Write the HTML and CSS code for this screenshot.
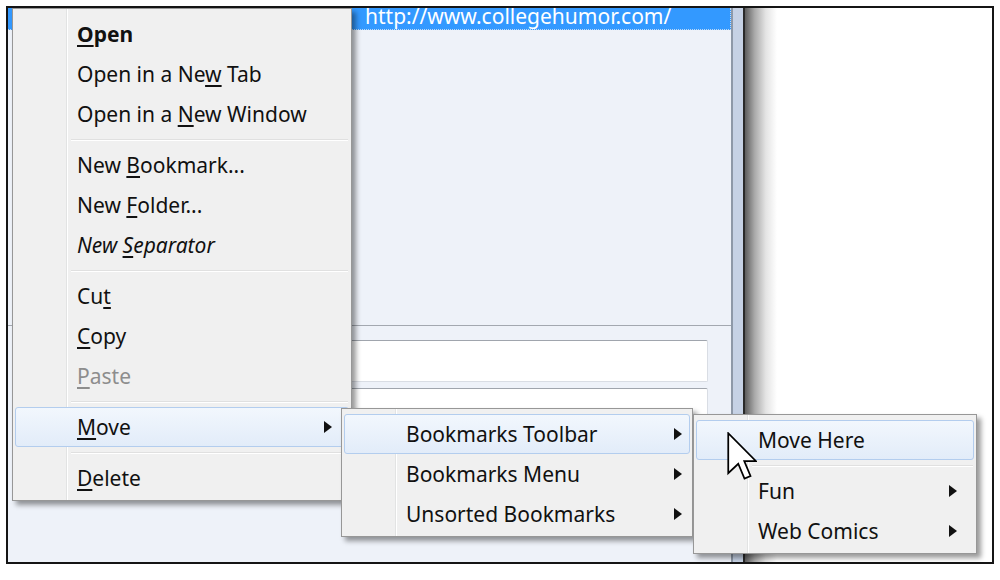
FILE: index.html
```html
<!DOCTYPE html>
<html>
<head>
<meta charset="utf-8">
<link rel="stylesheet" href="styles.css">
</head>
<body>
<div class="frame">
  <div class="panel">
    <div class="list">
      <div class="row-sel"><span>http://www.collegehumor.com/</span></div>
    </div>
    <div class="details">
      <div class="field"></div>
      <div class="field"></div>
    </div>
  </div>
  <div class="scroll"></div>
  <div class="shade"></div>
  <div class="blank"></div>
</div>

<div class="menu m1">
  <div class="item bold"><span class="label"><u>O</u>pen</span></div>
  <div class="item"><span class="label">Open in a Ne<u>w</u> Tab</span></div>
  <div class="item"><span class="label">Open in a <u>N</u>ew Window</span></div>
  <div class="sep"></div>
  <div class="item"><span class="label">New <u>B</u>ookmark...</span></div>
  <div class="item"><span class="label">New <u>F</u>older...</span></div>
  <div class="item ital"><span class="label">New <u>S</u>eparator</span></div>
  <div class="sep"></div>
  <div class="item"><span class="label">Cu<u>t</u></span></div>
  <div class="item"><span class="label"><u>C</u>opy</span></div>
  <div class="item dis"><span class="label"><u>P</u>aste</span></div>
  <div class="sep"></div>
  <div class="item hl"><span class="label"><u>M</u>ove</span><span class="arrow"></span></div>
  <div class="sep"></div>
  <div class="item"><span class="label"><u>D</u>elete</span></div>
</div>

<div class="menu m2">
  <div class="item hl"><span class="label">Bookmarks Toolbar</span><span class="arrow"></span></div>
  <div class="item"><span class="label">Bookmarks Menu</span><span class="arrow"></span></div>
  <div class="item"><span class="label">Unsorted Bookmarks</span><span class="arrow"></span></div>
</div>

<div class="menu m3">
  <div class="item hl"><span class="label">Move Here</span></div>
  <div class="sep"></div>
  <div class="item"><span class="label">Fun</span><span class="arrow"></span></div>
  <div class="item"><span class="label">Web Comics</span><span class="arrow"></span></div>
</div>

<svg class="cursor" viewBox="0 0 12 20" width="30" height="50">
  <path d="M0.5,0.5 L0.5,16.5 L4.5,12.7 L7,18.6 L9.4,17.6 L6.9,11.6 L11.5,11.6 Z" fill="#fff" stroke="#000" stroke-width="0.7" stroke-linejoin="miter"/>
</svg>
</body>
</html>
```

FILE: styles.css
```css
* { box-sizing: border-box; }

html, body {
  margin: 0;
  padding: 0;
}

body {
  width: 1000px;
  height: 580px;
  position: relative;
  overflow: hidden;
  background: #fff;
  font-family: "Noto Sans", "Open Sans", sans-serif;
  font-size: 21px;
  color: #111;
}

/* window frame */
.frame {
  margin: 6px 0 0 6px;
  width: 988px;
  height: 558px;
  border: 2px solid #151515;
  display: flex;
}

.panel {
  width: 723px;
  background: #eef2f9;
  display: flex;
  flex-direction: column;
}

.list {
  height: 317px;
}

.row-sel {
  height: 22px;
  background: #3399ff;
  color: #fff;
  padding-left: 357px;
  line-height: 17px;
  border-bottom: 1px dotted #bcd8f5;
  border-right: 1px dotted #bcd8f5;
  white-space: nowrap;
}

.details {
  flex: 1;
  border-top: 1px solid #a3a8b0;
  padding: 14px 23px 0 0;
  display: flex;
  flex-direction: column;
  align-items: flex-end;
  gap: 6px;
  overflow: hidden;
}

.field {
  flex: none;
  width: 420px;
  height: 42px;
  background: #fff;
  border: 1px solid #d9dde4;
  border-top-color: #a0a5ad;
  border-radius: 2px;
}

.scroll {
  width: 14px;
  background: #c6d2e5;
  border-left: 2px solid #8e99a8;
  border-right: 2px solid #2a2a2a;
}

.shade {
  width: 32px;
  background: linear-gradient(to right, #5e5e5e, #a9a9a9 30%, #e4e4e4 65%, #fff);
}

.blank {
  flex: 1;
  background: #fff;
}

/* menus */
.menu {
  position: absolute;
  background:
    linear-gradient(to right, transparent 53px, #e2e3e3 53px, #e2e3e3 54px, #fff 54px, #fff 55px, transparent 55px),
    #f0f0f0;
  border: 1px solid #979797;
  padding: 5px 2px 2px;
  box-shadow: 4px 4px 5px rgba(0, 0, 0, 0.4);
}

.m1 { left: 12px; top: 8px; width: 340px; }
.m2 { left: 341px; top: 408px; width: 352px; }
.m3 { left: 693px; top: 414px; width: 284px; }

.item {
  height: 40px;
  display: flex;
  align-items: center;
  padding-left: 62px;
  padding-right: 17px;
  white-space: nowrap;
}

.label u {
  text-decoration-thickness: 1.5px;
  text-underline-offset: 3px;
}

.bold { font-weight: bold; }
.ital { font-style: italic; }
.dis { color: #8d8d8d; }

.hl {
  background: linear-gradient(#f2f7fd, #e2ecf9);
  border: 1px solid #b3cdee;
  border-radius: 3px;
  padding-left: 61px;
  padding-right: 16px;
}

.m2 .item { padding-right: 8px; }
.m2 .hl { padding-right: 7px; }

.arrow {
  margin-left: auto;
  width: 0;
  height: 0;
  border-left: 8px solid #111;
  border-top: 6px solid transparent;
  border-bottom: 6px solid transparent;
}

.sep {
  height: 11px;
  margin-left: 56px;
  margin-right: 1px;
  background: linear-gradient(to bottom, transparent 5px, #e0e0e0 5px, #e0e0e0 6px, #fff 6px, #fff 7px, transparent 7px);
}

.cursor {
  position: absolute;
  left: 727px;
  top: 432px;
}
```
